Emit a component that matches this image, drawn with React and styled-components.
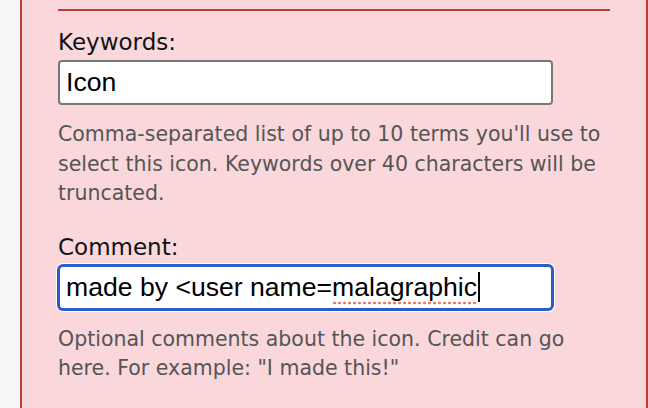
import React from 'react'
import styled, { createGlobalStyle } from 'styled-components'

const GlobalStyle = createGlobalStyle`
    html, body {
        margin: 0;
        padding: 0;
        background-color: #f6f6f6;
    }
    #root {
        min-height: 100vh;
        display: flex;
    }
`

const Page = styled.div`
    display: flex;
    flex: 1;
    padding-left: 20px;
    min-height: 408px;
`

const Panel = styled.div`
    flex: 1;
    background-color: #f9d7da;
    border-left: 2px solid #bf3b3b;
    border-right: 2px solid #bf3b3b;
    padding: 9px 36px 0 36px;
    overflow: hidden;
`

const Rule = styled.div`
    height: 2px;
    background-color: #bf3b3b;
`

const Section = styled.div`
    margin-top: ${props => props.$first ? 17 : 24}px;
`

const Label = styled.div`
    font-family: "DejaVu Sans", Verdana, sans-serif;
    font-size: 23px;
    line-height: 28px;
    color: #111;
`

const Field = styled.div`
    box-sizing: border-box;
    margin-top: 4px;
    width: 495px;
    height: 45px;
    display: flex;
    align-items: center;
    padding: 0 6px;
    background-color: #fff;
    border: 2px solid ${props => props.$focused ? '#2a5ec6' : '#777'};
    border-radius: ${props => props.$focused ? 5 : 4}px;
    box-shadow: ${props => props.$focused ? '0 0 0 1px #2a5ec6, 0 0 0 2px #fff' : 'none'};
    font-family: "Liberation Sans", Arial, sans-serif;
    font-size: 26.6px;
    color: #000;
    white-space: nowrap;
`

const Misspelled = styled.span`
    background-image: radial-gradient(circle, #ec7a70 1.3px, transparent 1.6px);
    background-repeat: repeat-x;
    background-position: 0 100%;
    background-size: 5px 4px;
    padding-bottom: 3px;
`

const Caret = styled.span`
    display: inline-block;
    width: 2px;
    height: 30px;
    margin-left: 1px;
    background-color: #000;
    vertical-align: -7px;
`

const Help = styled.p`
    margin: 15px 0 0 0;
    font-family: "DejaVu Sans", Verdana, sans-serif;
    font-size: 20.5px;
    line-height: 29.5px;
    color: #555;
`

export default function App() {
    return (
        <>
            <GlobalStyle />
            <Page>
                <Panel>
                    <Rule />
                    <Section $first>
                        <Label>Keywords:</Label>
                        <Field>
                            <span>Icon</span>
                        </Field>
                        <Help>
                            Comma-separated list of up to 10 terms you'll use to
                            select this icon. Keywords over 40 characters will be
                            truncated.
                        </Help>
                    </Section>
                    <Section>
                        <Label>Comment:</Label>
                        <Field $focused>
                            <span>made by &lt;user name=<Misspelled>malagraphic</Misspelled></span>
                            <Caret />
                        </Field>
                        <Help>
                            Optional comments about the icon. Credit can go
                            here. For example: "I made this!"
                        </Help>
                    </Section>
                </Panel>
            </Page>
        </>
    )
}
